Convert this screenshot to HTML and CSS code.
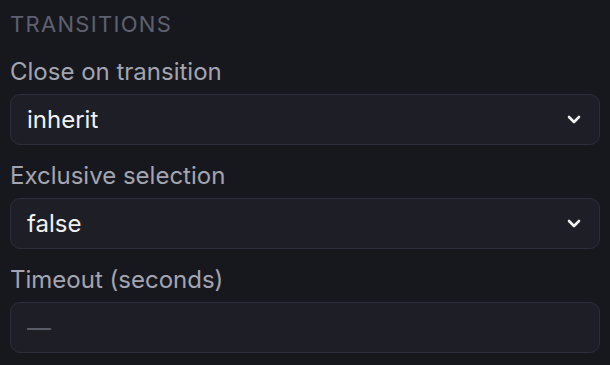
FILE: index.html
```html
<!DOCTYPE html>
<html lang="en">
<head>
<meta charset="UTF-8">
<meta name="viewport" content="width=device-width, initial-scale=1.0">
<title>Transitions</title>
<link rel="stylesheet" href="styles.css">
</head>
<body>

<section class="panel">
  <h2 class="section-title">Transitions</h2>

  <div class="field">
    <label class="field-label" for="closeOnTransition">Close on transition</label>
    <div class="select-wrap">
      <select class="field-input" id="closeOnTransition">
        <option selected>inherit</option>
        <option>true</option>
        <option>false</option>
      </select>
      <svg class="chevron" width="14" height="9" viewBox="0 0 14 9"><polyline points="2,2 7,7 12,2" fill="none" stroke="#f2f2f4" stroke-width="2.6" stroke-linecap="round" stroke-linejoin="round"/></svg>
    </div>
  </div>

  <div class="field">
    <label class="field-label" for="exclusiveSelection">Exclusive selection</label>
    <div class="select-wrap">
      <select class="field-input" id="exclusiveSelection">
        <option>true</option>
        <option selected>false</option>
      </select>
      <svg class="chevron" width="14" height="9" viewBox="0 0 14 9"><polyline points="2,2 7,7 12,2" fill="none" stroke="#f2f2f4" stroke-width="2.6" stroke-linecap="round" stroke-linejoin="round"/></svg>
    </div>
  </div>

  <div class="field">
    <label class="field-label" for="timeout">Timeout (seconds)</label>
    <input class="field-input" type="text" id="timeout" placeholder="—">
  </div>
</section>

</body>
</html>
```

FILE: styles.css
```css
body {
  margin: 0;
  padding: 0;
  background-color: #17181e;
  font-family: Inter, "Noto Sans", sans-serif;
}
.panel {
  padding: 10px 10px 0 10px;
}
.section-title {
  margin: 0 0 20px 0;
  font-size: 22px;
  line-height: 28px;
  font-weight: 400;
  letter-spacing: 1.3px;
  text-transform: uppercase;
  color: #5e616e;
}
.field {
  margin-bottom: 17px;
}
.field-label {
  display: block;
  margin-bottom: 8px;
  font-size: 24px;
  line-height: 28px;
  color: #a3a5b0;
}
.select-wrap {
  position: relative;
}
.field-input {
  display: block;
  width: 100%;
  height: 51px;
  box-sizing: border-box;
  margin: 0;
  padding: 0 16px;
  border: 1px solid #2c2e39;
  border-radius: 10px;
  background-color: #1e1f26;
  color: #f2f2f4;
  font-family: inherit;
  font-size: 24px;
  outline: none;
  appearance: none;
  -webkit-appearance: none;
}
.field-input::placeholder {
  color: #5a5c68;
}
.chevron {
  position: absolute;
  right: 19px;
  top: 21px;
  pointer-events: none;
}
```
